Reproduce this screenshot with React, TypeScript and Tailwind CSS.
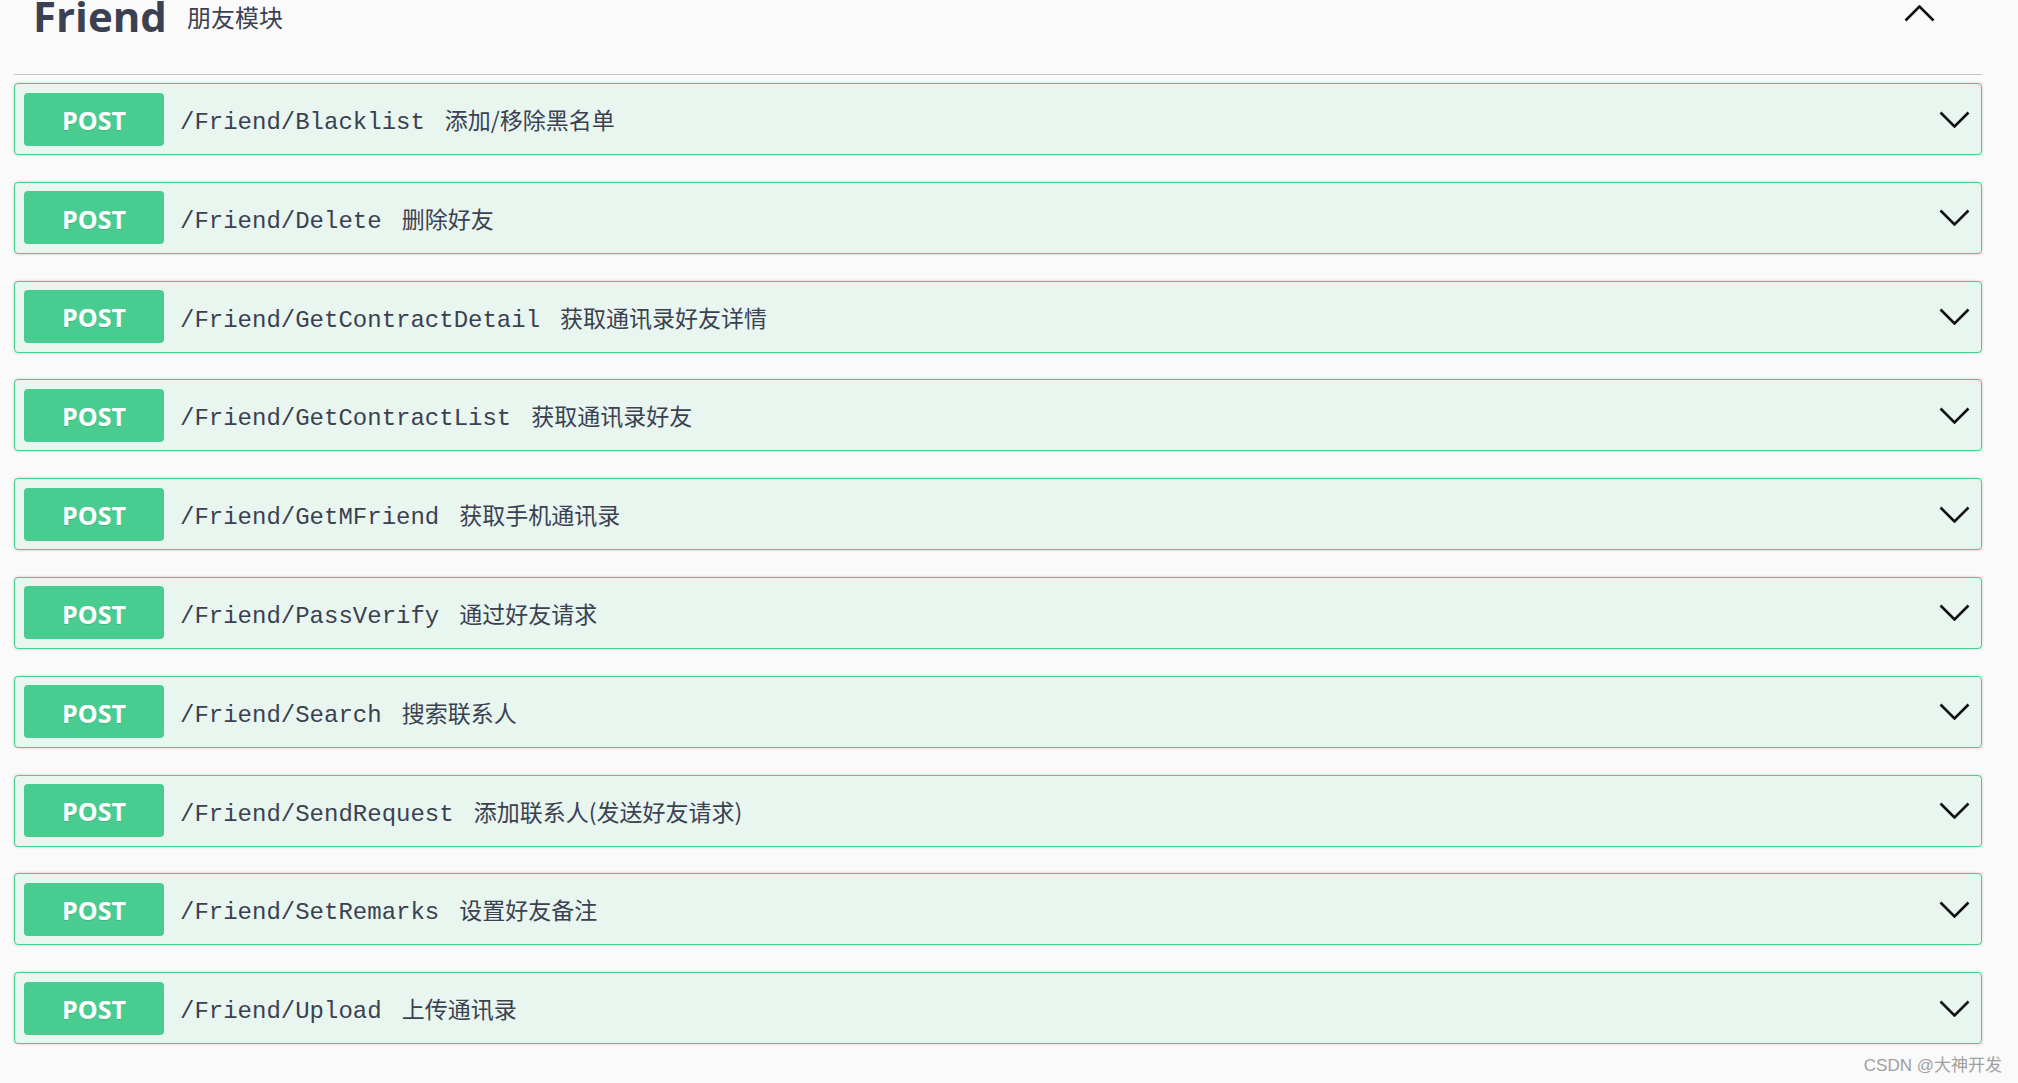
import React from "react";

const rows: [string, string][] = [
  ["/Friend/Blacklist", "添加/移除黑名单"],
  ["/Friend/Delete", "删除好友"],
  ["/Friend/GetContractDetail", "获取通讯录好友详情"],
  ["/Friend/GetContractList", "获取通讯录好友"],
  ["/Friend/GetMFriend", "获取手机通讯录"],
  ["/Friend/PassVerify", "通过好友请求"],
  ["/Friend/Search", "搜索联系人"],
  ["/Friend/SendRequest", "添加联系人(发送好友请求)"],
  ["/Friend/SetRemarks", "设置好友备注"],
  ["/Friend/Upload", "上传通讯录"],
];

function Chevron({ up = false }: { up?: boolean }) {
  return (
    <svg width="31" height="17" viewBox="0 0 31 17" className="block shrink-0">
      <polyline
        points={up ? "1.5,15.5 15.5,1.5 29.5,15.5" : "1.5,1.5 15.5,15.5 29.5,1.5"}
        fill="none"
        stroke="#111"
        strokeWidth="2.6"
      />
    </svg>
  );
}

export default function App() {
  return (
    <div className="relative min-h-screen bg-[#fafafa] pl-[14px] pr-[36px] text-[#3b4151]">
      <div className="flex h-[75px] items-start border-b border-[#c4c4c4]">
        <div
          className="ml-[19px] mt-[-5px] text-[42px] font-bold leading-[42px] text-[#3b4151]"
          style={{ fontFamily: '"Open Sans", "Noto Sans", sans-serif' }}
        >
          Friend
        </div>
        <div
          className="ml-[20px] mt-[5px] text-[24px] leading-[24px] text-[#3b4151]"
          style={{ fontFamily: '"Noto Sans CJK SC", sans-serif' }}
        >
          朋友模块
        </div>
        <div className="ml-auto mr-[47px] mt-[5px]">
          <Chevron up />
        </div>
      </div>

      <div className="mt-[8px] flex flex-col gap-[26.8px]">
        {rows.map(([path, desc]) => (
          <div
            key={path}
            className="flex h-[72px] items-center rounded-[4px] border border-[#49cc90] bg-[#e8f6ef] pl-[9px] pr-[11px] shadow-[0_0_3px_rgba(0,0,0,0.19)]"
          >
            <div
              className="flex h-[53px] w-[140px] shrink-0 items-center justify-center rounded-[4px] bg-[#49cc90] pt-[3px] text-[25px] font-bold text-white [text-shadow:0_1px_0_rgba(0,0,0,0.12)]"
              style={{ fontFamily: '"Open Sans", "Noto Sans", sans-serif' }}
            >
              POST
            </div>
            <div
              className="ml-[16px] mt-[8px] text-[24px] leading-[30px] text-[#3b4151]"
              style={{ fontFamily: '"Liberation Mono", monospace' }}
            >
              {path}
            </div>
            <div
              className="ml-[20px] text-[23px] leading-[30px] text-[#3b4151]"
              style={{ fontFamily: '"Noto Sans CJK SC", sans-serif' }}
            >
              {desc}
            </div>
            <div className="ml-auto">
              <Chevron />
            </div>
          </div>
        ))}
      </div>

      <div
        className="absolute bottom-[9px] right-[16px] text-[17px] leading-[17px] text-[#a0a0a0]"
        style={{ fontFamily: '"Liberation Sans", "Noto Sans CJK SC", sans-serif' }}
      >
        CSDN @大神开发
      </div>
    </div>
  );
}
